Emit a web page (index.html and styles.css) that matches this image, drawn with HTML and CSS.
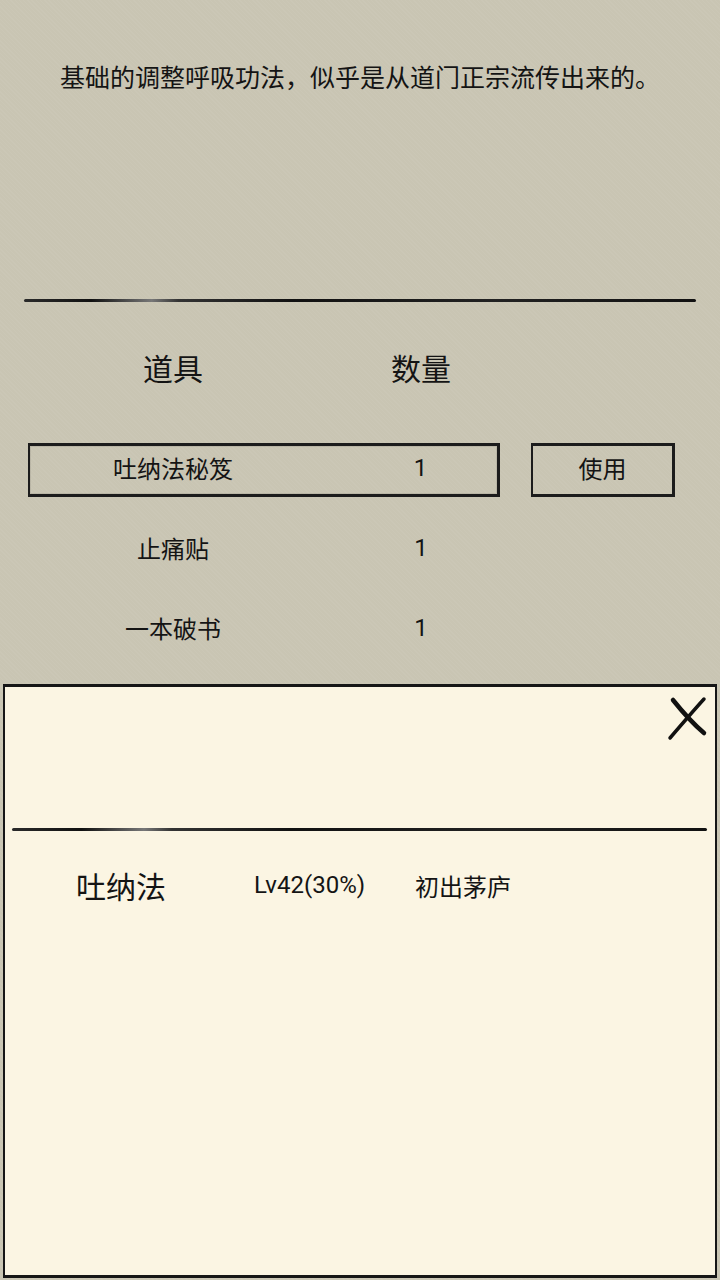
FILE: index.html
```html
<!DOCTYPE html>
<html lang="zh-CN">

<head>
  <meta charset="UTF-8">
  <meta name="viewport" content="width=device-width, initial-scale=1.0">
  <title>道具</title>
  <link rel="stylesheet" href="styles.css">
</head>

<body>
  <div class="page">
    <!-- item description -->
    <p class="desc">基础的调整呼吸功法，似乎是从道门正宗流传出来的。</p>
    <div class="rule"></div>

    <!-- bag list -->
    <div class="cols head">
      <span class="name">道具</span>
      <span class="count">数量</span>
    </div>
    <div class="items">
      <div class="item selected">
        <div class="cell-box">
          <span class="name">吐纳法秘笈</span>
          <span class="count">1</span>
        </div>
        <button class="use-btn">使用</button>
      </div>
      <div class="item">
        <div class="cell-box">
          <span class="name">止痛贴</span>
          <span class="count">1</span>
        </div>
      </div>
      <div class="item">
        <div class="cell-box">
          <span class="name">一本破书</span>
          <span class="count">1</span>
        </div>
      </div>
    </div>

    <!-- skill panel -->
    <div class="panel">
      <div class="panel-top">
        <button class="close-btn" aria-label="关闭">
          <svg width="42" height="46" viewBox="0 0 42 46">
            <path d="M6 4 C14 14 24 26 37 37" stroke="#111" stroke-width="4.5" fill="none" stroke-linecap="round" />
            <path d="M37 3 C27 14 15 28 3 42" stroke="#111" stroke-width="3.5" fill="none" stroke-linecap="round" />
          </svg>
        </button>
      </div>
      <div class="rule inner"></div>
      <div class="skill">
        <span class="skill-name">吐纳法</span>
        <span class="skill-lv">Lv42(30%)</span>
        <span class="skill-rank">初出茅庐</span>
      </div>
    </div>
  </div>
</body>

</html>
```

FILE: styles.css
```css
body {
  margin: 0;
  padding: 0;
  font-family: Roboto, "Noto Sans CJK SC", sans-serif;
  color: #141414;
  background-color: #c9c5b3;
}

.page {
  height: 1280px;
  display: flex;
  flex-direction: column;
  background-color: #c9c5b3;
  background-image: repeating-linear-gradient(45deg, rgba(255, 255, 255, 0.04) 0 1px, transparent 1px 3px);
}

.desc {
  margin: 0;
  padding-top: 63px;
  font-size: 25px;
  line-height: 32px;
  text-align: center;
}

/* brush stroke divider */
.rule {
  height: 3px;
  margin: 204px 24px 0 24px;
  border-radius: 2px;
  background: linear-gradient(90deg,
      #2a2a2a 0%, #111 10%, #777 19%, #333 23%, #111 40%, #222 70%, #111 100%);
}

.cols,
.cell-box {
  display: grid;
  grid-template-columns: 286px 1fr;
  align-items: center;
}

.name {
  text-align: center;
}

.count {
  text-align: center;
  padding-left: 28px;
}

.head {
  margin: 43px 28px 0 30px;
  width: 468px;
  height: 40px;
  font-size: 30px;
}

.items {
  margin: 45px 28px 0 28px;
}

.item {
  height: 80px;
  display: flex;
  align-items: center;
  gap: 31px;
  font-size: 24px;
}

.cell-box {
  box-sizing: border-box;
  width: 472px;
  height: 54px;
  padding-bottom: 5px;
  border: 2px solid transparent;
  border-width: 3px 2px 3px 2px;
}

.selected .cell-box {
  border-color: #1c1c1c;
  border-right-width: 3px;
  box-shadow: inset 0 0 0 1px rgba(0, 0, 0, 0.08);
}

.use-btn {
  box-sizing: border-box;
  width: 144px;
  height: 54px;
  padding: 0 0 5px 0;
  font: inherit;
  color: inherit;
  background: transparent;
  border: 2px solid #1c1c1c;
  border-width: 3px 3px 3px 2px;
  cursor: pointer;
}

.panel {
  flex: 1;
  margin: 14px 3px 2px 3px;
  background: #fbf5e3;
  border: 2px solid #161616;
  border-top-width: 3px;
  border-bottom-width: 3px;
  display: flex;
  flex-direction: column;
}

.panel-top {
  height: 141px;
  display: flex;
  justify-content: flex-end;
  align-items: flex-start;
  padding-right: 6px;
}

.close-btn {
  margin-top: 9px;
  padding: 0;
  background: none;
  border: none;
  cursor: pointer;
}

.rule.inner {
  margin: 0 8px 0 7px;
}

.skill {
  margin-top: 32px;
  padding-left: 71px;
  height: 40px;
  display: grid;
  grid-template-columns: 178px 161px 1fr;
  align-items: center;
  font-size: 24px;
}

.skill-name {
  font-size: 30px;
}
```
